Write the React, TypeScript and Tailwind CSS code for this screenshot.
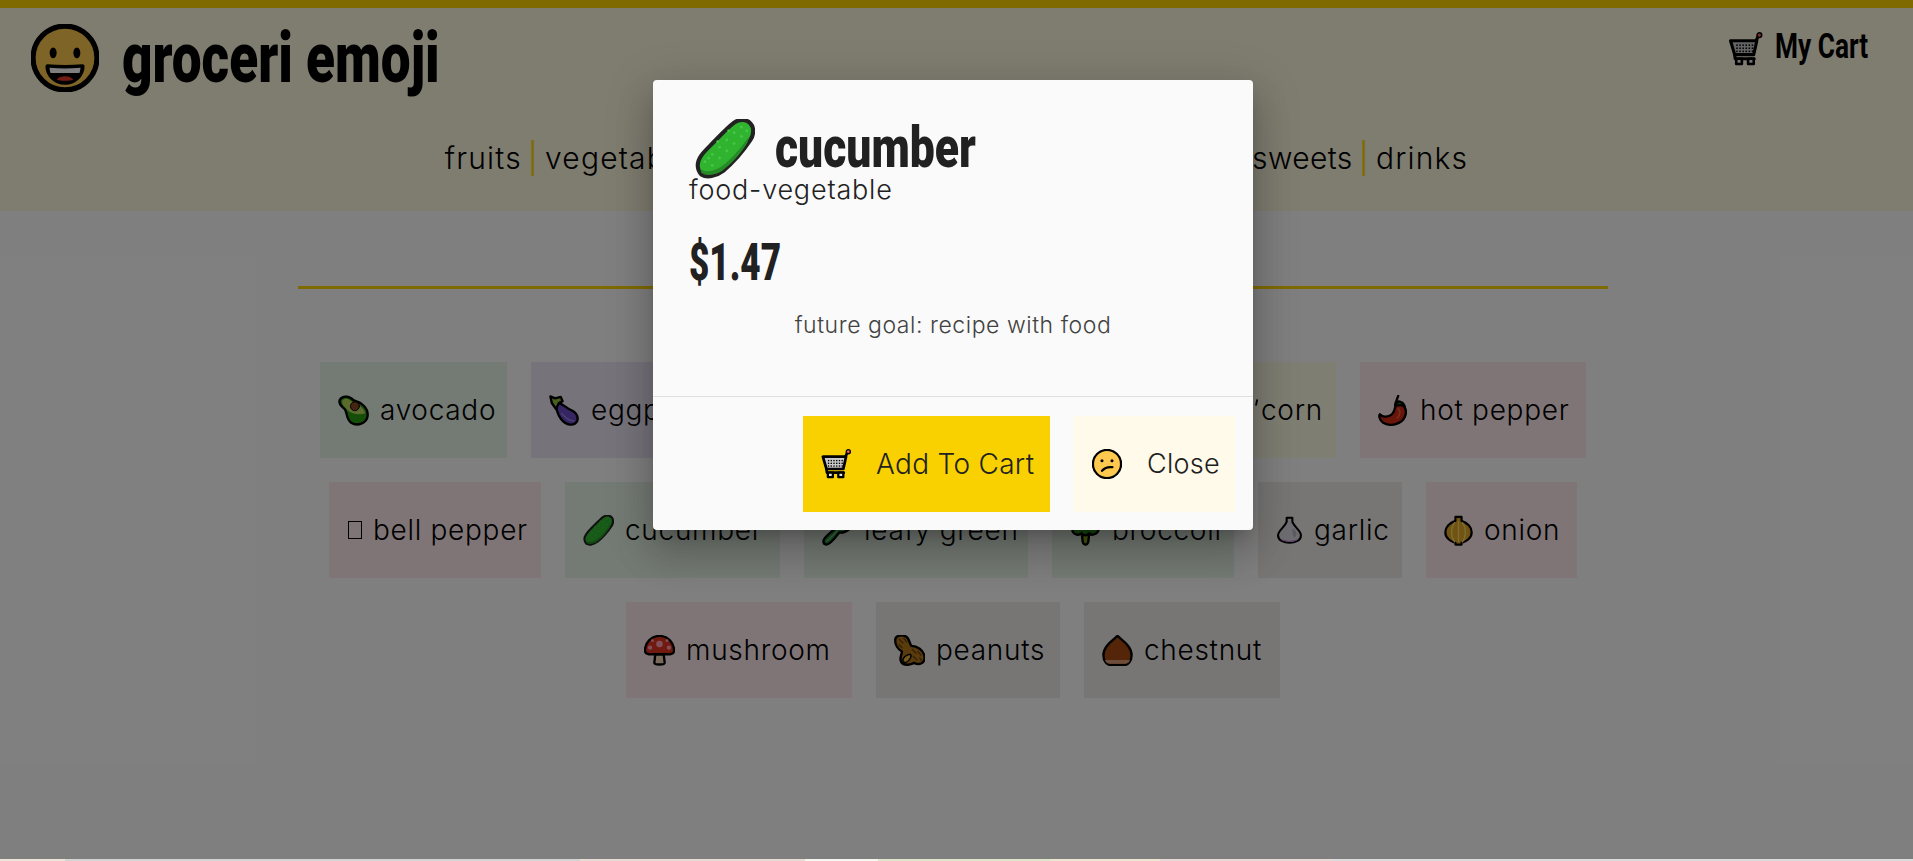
import React from "react";

type IconProps = { className?: string };
const Svg = ({ className, children }: IconProps & { children: React.ReactNode }) => (
  <svg viewBox="3 3 66 66" className={className} stroke="#000" strokeWidth={5} strokeLinejoin="round" strokeLinecap="round" fill="none">
    {children}
  </svg>
);

const Smile = ({ className }: IconProps) => (
  <Svg className={className}>
    <circle cx="36" cy="36" r="31" fill="#ffc84e" />
    <ellipse cx="24.5" cy="31" rx="3.4" ry="5.2" fill="#000" stroke="none" />
    <ellipse cx="47.5" cy="31" rx="3.4" ry="5.2" fill="#000" stroke="none" />
    <path d="M19 44 C30 45 42 45 53 44 C53 53 45 60 36 60 C27 60 19 53 19 44Z" fill="#000" strokeWidth={4} />
    <path d="M21 45.5 C31 46.5 41 46.5 51 45.5 C51 47 50.5 49 50 50.5 L22 50.5 C21.5 49 21 47 21 45.5Z" fill="#fff" stroke="none" />
    <path d="M28 57 C31 52.5 41 52.5 44 57 C40 58.5 32 58.5 28 57Z" fill="#e5392a" stroke="none" />
  </Svg>
);

const Cart = ({ className }: IconProps) => (
  <Svg className={className}>
    <path d="M54 24 L60 10" strokeWidth={6} />
    <circle cx="62" cy="9" r="4.5" fill="#ff5a5a" strokeWidth={3} />
    <path d="M6 20 H57 L51 47 H14 Z" fill="#c9c9c9" strokeWidth={6} />
    {[27, 33, 39].map((y) =>
      [17, 23, 29, 35, 41, 47].map((x) => <rect key={x + "-" + y} x={x} y={y} width="3" height="3" fill="#000" stroke="none" />)
    )}
    <path d="M14 47 L15 55 H52" strokeWidth={6} />
    <path d="M17 55 V65 H28 V55 Z" fill="#e5e5e5" />
    <path d="M40 55 V65 H51 V55 Z" fill="#e5e5e5" />
  </Svg>
);

const Cucumber = ({ className }: IconProps) => (
  <Svg className={className}>
    <path d="M6 54 C6 46 12 40 20 32 C30 22 38 13 46 7 C52 3 60 3 64 8 C68 12 68 20 64 26 C56 38 46 50 34 60 C26 66 16 68 10 64 C7 61 6 58 6 54Z" fill="#30b430" stroke="#222" strokeWidth={4.5} />
    <path d="M9 58 C16 63 26 60 34 54 C44 46 54 34 62 23 C62 27 60 31 56 36 C50 45 42 53 33 60 C26 65 15 66 10 62Z" fill="#268a26" stroke="none" />
    {[[14, 50], [22, 42], [30, 34], [38, 26], [46, 18], [54, 12], [22, 54], [30, 46], [38, 38], [46, 30], [54, 22], [60, 16], [18, 46], [28, 28], [40, 16]].map(([x, y]) => (
      <circle key={x + "," + y} cx={x} cy={y} r="1.5" fill="#46c846" stroke="none" />
    ))}
  </Svg>
);

const Sad = ({ className }: IconProps) => (
  <Svg className={className}>
    <circle cx="36" cy="36" r="31" fill="#ffc84e" />
    <circle cx="25" cy="29" r="3.4" fill="#000" stroke="none" />
    <circle cx="47" cy="29" r="3.4" fill="#000" stroke="none" />
    <path d="M25 51 C31 44 40 42 48 43" />
  </Svg>
);

const Avocado = ({ className }: IconProps) => (
  <Svg className={className}>
    <path d="M7 13 C13 3 28 5 36 14 C52 19 68 30 66 48 C64 64 44 70 31 62 C20 54 23 42 18 34 C12 28 3 22 7 13Z" fill="#2a9d13" />
    <path d="M12 15 C17 8 27 10 33 18 C44 22 58 29 61 42 C48 46 34 44 24 36 C20 30 10 24 12 15Z" fill="#b8d45a" stroke="none" />
    <circle cx="39" cy="27" r="9.5" fill="#8a4b22" stroke="#000" strokeWidth={2} />
  </Svg>
);

const Eggplant = ({ className }: IconProps) => (
  <Svg className={className}>
    <path d="M18 20 C28 16 36 30 52 36 C68 44 68 64 52 66 C34 68 18 46 18 20Z" fill="#6a4bc4" />
    <path d="M30 42 C38 52 46 58 56 58" stroke="#9a82e0" strokeWidth={3} />
    <path d="M6 6 L9 20 L18 33 L24 20 L32 16 L28 7 L16 10 Z" fill="#93bf3b" />
  </Svg>
);

const Potato = ({ className }: IconProps) => (
  <Svg className={className}>
    <ellipse cx="36" cy="38" rx="28" ry="22" fill="#c99a5b" />
  </Svg>
);
const Carrot = ({ className }: IconProps) => (
  <Svg className={className}>
    <path d="M50 20 C36 18 16 44 10 62 C28 56 54 36 50 20Z" fill="#f28c1e" />
    <path d="M50 20 L64 8 M50 20 L50 6 M50 20 L66 22" stroke="#3a9e2c" />
  </Svg>
);
const Corn = ({ className }: IconProps) => (
  <Svg className={className + " overflow-visible"}>
    <path d="M58 8 C40 10 16 34 12 52 C24 52 54 32 58 8Z" fill="#ffd93b" />
    <path d="M12 52 C12 62 30 66 44 50 C36 52 24 50 22 42 Z" fill="#6cb83a" />
    <path d="M84 14 L82 24" strokeWidth={4} />
  </Svg>
);

const HotPepper = ({ className }: IconProps) => (
  <Svg className={className}>
    <path d="M50 18 C60 24 66 38 60 50 C54 64 30 72 14 62 C5 56 5 46 7 44 C12 50 22 50 30 46 C38 42 40 30 41 20 C43 17 47 16 50 18Z" fill="#d22c14" />
    <path d="M40 26 C40 16 44 12 46 5 M40 22 C46 15 56 16 60 28 C54 24 46 24 40 26Z" fill="#2c9a2c" />
    <path d="M46 32 C52 36 50 46 44 52" stroke="#f06040" strokeWidth={3} />
  </Svg>
);

const Leafy = ({ className }: IconProps) => (
  <Svg className={className}>
    <path d="M6 58 C6 50 26 38 32 30 C30 18 40 6 56 6 C66 10 68 26 60 34 C52 40 46 42 40 40 C34 48 20 66 12 66 C8 66 6 62 6 58Z" fill="#2ea043" />
    <path d="M14 58 C24 50 38 34 50 20" stroke="#7bd389" strokeWidth={3} />
  </Svg>
);

const Broccoli = ({ className }: IconProps) => (
  <Svg className={className}>
    <path d="M28 40 L30 60 C32 68 40 68 42 60 L44 40 Z" fill="#8fb022" />
    <path d="M36 6 C46 4 54 10 54 16 C64 16 70 26 64 34 C62 44 48 48 44 42 C38 48 32 48 28 42 C20 48 8 44 8 34 C2 24 10 14 18 16 C20 10 28 6 36 6Z" fill="#2f8f1e" />
  </Svg>
);

const Garlic = ({ className }: IconProps) => (
  <Svg className={className}>
    <path d="M29 5 H43 V15 C48 28 64 36 64 48 C64 60 50 66 36 66 C22 66 8 60 8 48 C8 36 24 28 29 15 Z" fill="#dcdce4" />
    <path d="M12 55 C24 63 48 63 60 55 C54 63 46 64 36 64 C26 64 18 63 12 55Z" fill="#c088d4" stroke="none" />
    <path d="M44 30 C54 38 56 48 48 54 C42 44 42 38 44 30Z" fill="#b8b8c4" stroke="none" />
  </Svg>
);

const Onion = ({ className }: IconProps) => (
  <Svg className={className}>
    <path d="M29 5 H43 V14 C56 18 66 28 66 40 C66 54 52 62 43 64 V68 H29 V64 C20 62 6 54 6 40 C6 28 16 18 29 14 Z" fill="#e2a81f" />
    <path d="M36 16 V62 M27 18 C18 30 18 50 27 62 M45 18 C54 30 54 50 45 62" stroke="#f6d67a" strokeWidth={3} />
  </Svg>
);

const Mushroom = ({ className }: IconProps) => (
  <Svg className={className}>
    <path d="M27 44 L25 62 C25 67 47 67 47 62 L45 44 Z" fill="#f2d4b8" />
    <path d="M36 5 C54 5 67 20 67 36 C67 44 58 45 50 44 H22 C14 45 5 44 5 36 C5 20 18 5 36 5Z" fill="#e2351e" />
    <circle cx="36" cy="22" r="7" fill="#ff9fb4" stroke="none" />
    <circle cx="16" cy="30" r="4.5" fill="#ff9fb4" stroke="none" />
    <circle cx="56" cy="30" r="4.5" fill="#ff9fb4" stroke="none" />
    <circle cx="52" cy="15" r="3" fill="#ff9fb4" stroke="none" />
    <circle cx="21" cy="15" r="3" fill="#ff9fb4" stroke="none" />
  </Svg>
);

const Peanuts = ({ className }: IconProps) => (
  <Svg className={className}>
    <path d="M6 12 C6 4 20 2 28 6 C36 10 36 22 40 26 C50 26 68 34 68 52 C68 64 56 68 46 62 C40 66 24 70 18 60 C14 52 20 44 20 38 C12 34 4 24 6 12Z" fill="#b5771c" />
    <path d="M14 12 L22 20 M24 10 L30 18 M14 24 L20 30 M42 34 L50 42 M54 38 L60 46 M44 48 L52 56 M58 52 L62 58" stroke="#6a4208" strokeWidth={3} />
    <path d="M22 60 C20 52 30 44 38 44 C42 48 36 58 28 62Z" fill="#e5b33f" stroke="#000" strokeWidth={3} />
  </Svg>
);

const Chestnut = ({ className }: IconProps) => (
  <Svg className={className}>
    <path d="M36 5 C46 15 66 26 66 46 C66 60 58 67 50 67 H22 C14 67 6 60 6 46 C6 26 26 15 36 5Z" fill="#a84a10" />
    <path d="M9 56 H63 C60 63 56 64 50 64 H22 C16 64 12 63 9 56Z" fill="#d89a78" stroke="none" />
  </Svg>
);

const Missing = () => <div className="w-[14px] h-[18px] ml-[1px] mr-[11px] border border-black" />;

const pink = "bg-[#ffebee]";
const green = "bg-[#e8f5e9]";
const purple = "bg-[#ede7f6]";
const yellow = "bg-[#fffde7]";
const gray = "bg-[#efedeb]";

const icon = "w-[31px] h-[31px] mr-[11px] shrink-0";
const cards = [
  { name: "avocado", w: "w-[187px]", bg: green, el: <Avocado className={icon} /> },
  { name: "eggplant", w: "w-[205px]", bg: purple, el: <Eggplant className={icon} /> },
  { name: "potato", w: "w-[195px]", bg: gray, el: <Potato className={icon} /> },
  { name: "carrot", w: "w-[198px]", bg: yellow, el: <Carrot className={icon} /> },
  { name: "corn", w: "w-[135px]", bg: yellow, el: <Corn className={icon} /> },
  { name: "hot pepper", w: "w-[226px]", bg: pink, el: <HotPepper className={icon} /> },
  { name: "bell pepper", w: "w-[212px]", bg: pink, el: <Missing /> },
  { name: "cucumber", w: "w-[215px]", bg: green, el: <Cucumber className={icon} /> },
  { name: "leafy green", w: "w-[224px]", bg: green, el: <Leafy className={icon} /> },
  { name: "broccoli", w: "w-[182px]", bg: green, el: <Broccoli className={icon} /> },
  { name: "garlic", w: "w-[144px]", bg: gray, el: <Garlic className="w-[27px] h-[31px] mr-[11px] shrink-0" /> },
  { name: "onion", w: "w-[151px]", bg: pink, el: <Onion className="w-[29px] h-[31px] mr-[11px] shrink-0" /> },
  { name: "mushroom", w: "w-[226px]", bg: pink, el: <Mushroom className={icon} /> },
  { name: "peanuts", w: "w-[184px]", bg: gray, el: <Peanuts className={icon} /> },
  { name: "chestnut", w: "w-[196px]", bg: gray, el: <Chestnut className={icon} /> },
];

const sans = "font-['Inter',sans-serif] font-light";
const display = "inline-block origin-left whitespace-nowrap font-['Roboto',sans-serif] font-black";

const Pipe = () => <span className="mx-[6px] text-[#ffd500] font-normal">|</span>;

const strip = [
  ["w-[65px]", "bg-[#ece5d8]"],
  ["w-[515px]", "bg-[#d4d4d4]"],
  ["w-[225px]", "bg-[#e8dcd6]"],
  ["w-[73px]", "bg-[#f6f7f0]"],
  ["w-[172px]", "bg-[#e0e6cc]"],
  ["w-[110px]", "bg-[#ece6d2]"],
  ["w-[172px]", "bg-[#e8d8d6]"],
  ["flex-1", "bg-[#dcdcdc]"],
];

export default function App() {
  return (
    <div className={"relative h-[861px] overflow-hidden bg-white flex flex-col text-black " + sans}>
      <header className="h-[211px] shrink-0 border-t-8 border-[#ffd500] bg-[#fff8e1] flex flex-col">
        <div className="h-[120px] flex items-start justify-between pl-[31px] pr-[46px]">
          <div className="flex items-center mt-[16px]">
            <Smile className="w-[68px] h-[68px]" />
            <span className={"ml-[23px] w-[317px] text-[71px] leading-[68px] scale-x-[0.748] " + display}>groceri emoji</span>
          </div>
          <div className="flex items-center mt-[24px]">
            <Cart className="w-[36px] h-[34px]" />
            <span className={"ml-[11px] w-[92px] -mt-[4px] text-[35px] leading-[34px] font-bold scale-x-[0.75] " + display}>My Cart</span>
          </div>
        </div>
        <nav className="flex justify-center text-[30px] leading-[40px] tracking-[1.2px] whitespace-nowrap mt-[10px]">
          <span>fruits</span>
          <Pipe />
          <span className="w-[707px]">vegetables</span>
          <span className="tracking-[0.4px]">sweets</span>
          <Pipe />
          <span>drinks</span>
        </nav>
      </header>

      <main className="flex-1 w-[1310px] ml-[298px]">
        <div className="mt-[75px] h-[3px] bg-[#ffd500]" />
        <div className="mt-[73px] flex flex-wrap justify-center gap-6">
          {cards.map((c) => (
            <div key={c.name} className={"h-[96px] flex items-center pl-[18px] whitespace-nowrap text-[28px] tracking-[0.7px] " + c.w + " " + c.bg}>
              {c.el}
              <span>{c.name}</span>
            </div>
          ))}
        </div>
      </main>

      <div className="h-[2px] shrink-0 flex">
        {strip.map(([w, bg]) => (
          <div key={w + bg} className={w + " " + bg} />
        ))}
      </div>

      <div className="absolute inset-x-0 top-0 h-[859px] bg-black/50" />

      <div className="absolute left-[653px] top-[80px] w-[600px] h-[450px] rounded-[4px] bg-[#fafafa] text-[#212121] flex flex-col shadow-[0_24px_38px_3px_rgba(0,0,0,0.14),0_9px_46px_8px_rgba(0,0,0,0.12),0_11px_15px_-7px_rgba(0,0,0,0.2)]">
        <div className="h-[316px] px-[36px] pt-[39px] flex flex-col">
          <div className="flex items-center h-[60px]">
            <Cucumber className="w-[60px] h-[60px] ml-[6px]" />
            <span className={"ml-[20px] w-[200px] text-[57px] leading-[60px] -mt-[2px] scale-x-[0.78] " + display}>cucumber</span>
          </div>
          <div className="text-[27px] leading-[28px] -mt-[3px] tracking-[0.8px]">food-vegetable</div>
          <div className={"mt-[32px] text-[52px] leading-[54px] scale-x-[0.675] " + display}>$1.47</div>
          <div className="mt-[21px] text-center text-[23px] leading-[28px] text-[#424242] tracking-[0.55px]">future goal: recipe with food</div>
        </div>
        <div className="border-t border-[#e0e0e0] flex-1 flex justify-end gap-6 pr-[18px] pt-[19px] items-start">
          <button className="w-[247px] h-[96px] bg-[#f9d100] flex items-center pl-[18px] text-[28px] tracking-[0.3px] text-[#212121] whitespace-nowrap">
            <Cart className="w-[31px] h-[30px] mr-[24px]" />
            Add To Cart
          </button>
          <button className="w-[161px] h-[96px] bg-[#fffaea] flex items-center pl-[18px] text-[27px] tracking-[0.3px] text-[#212121] whitespace-nowrap">
            <Sad className="w-[30px] h-[30px] mr-[25px]" />
            Close
          </button>
        </div>
      </div>
    </div>
  );
}
